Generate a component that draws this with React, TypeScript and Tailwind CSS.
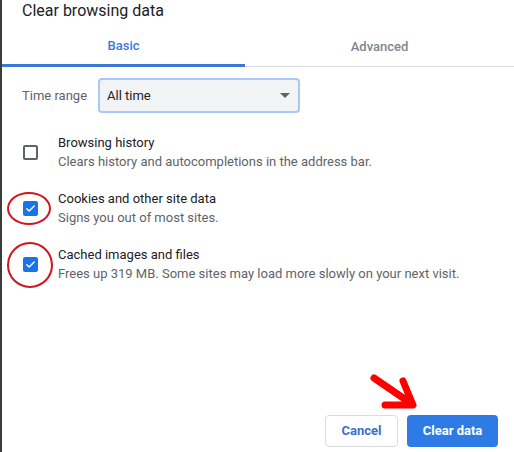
function Checkbox({ checked }: { checked: boolean }) {
  if (!checked) {
    return <div className="h-[15px] w-[15px] rounded-[2px] border-2 border-[#5f6368] bg-white" />;
  }
  return (
    <div className="flex h-[15px] w-[15px] items-center justify-center rounded-[2px] bg-[#1a73e8]">
      <svg width="11" height="11" viewBox="0 0 24 24" fill="none">
        <path d="M4 12.5l5 5L20 6.5" stroke="#fff" strokeWidth="3.2" strokeLinecap="round" strokeLinejoin="round" />
      </svg>
    </div>
  );
}

function Row({ checked, title, sub, ring }: { checked: boolean; title: string; sub: string; ring?: string }) {
  return (
    <div className="relative flex h-[56px] items-center">
      <div className="flex w-[56px] shrink-0 pl-[21px]">
        <Checkbox checked={checked} />
      </div>
      <div className="flex flex-col text-[13px] leading-[19px]">
        <span className="text-[#202124]">{title}</span>
        <span className="text-[#5f6368]">{sub}</span>
      </div>
      {ring && <div className={ring} />}
    </div>
  );
}

export default function App() {
  return (
    <div className="relative flex h-[452px] w-[514px] overflow-hidden bg-white font-['Roboto','Liberation_Sans',sans-serif]">
      <div className="w-[2px] shrink-0 bg-[#3c3c3c]" />
      <div className="flex flex-1 flex-col">
        <h1 className="h-[27px] pl-[20px] pt-[1px] text-[16px] leading-[20px] font-normal text-[#202124]">
          Clear browsing data
        </h1>
        <div className="flex h-[40px] text-[13px] font-medium">
          <div className="flex w-[243px] items-center justify-center border-b-[3px] border-[#3c78d8] text-[#3c78d8]">
            Basic
          </div>
          <div className="flex flex-1 items-center justify-center border-b border-[#dadce0] pt-[1px] text-[#80868b]">
            Advanced
          </div>
        </div>
        <div className="mt-[11px] flex items-center">
          <span className="w-[96px] pl-[20px] text-[13px] text-[#5f6368]">Time range</span>
          <div className="flex h-[35px] w-[202px] items-center justify-between rounded-[4px] border-2 border-[#a8c7fa] bg-[#f1f3f4] pl-[7px] pr-[8px] text-[13px] text-[#202124]">
            <span>All time</span>
            <svg width="10" height="5" viewBox="0 0 10 5">
              <path d="M0 0h10L5 5z" fill="#5f6368" />
            </svg>
          </div>
        </div>
        <div className="mt-[11px] flex flex-col">
          <Row checked={false} title="Browsing history" sub="Clears history and autocompletions in the address bar." />
          <Row
            checked
            title="Cookies and other site data"
            sub="Signs you out of most sites."
            ring="absolute left-[5px] top-[12px] h-[33px] w-[44px] rounded-[50%] border-2 border-[#d4141c]"
          />
          <Row
            checked
            title="Cached images and files"
            sub="Frees up 319 MB. Some sites may load more slowly on your next visit."
            ring="absolute left-[5px] top-[6px] h-[46px] w-[46px] rounded-[50%] border-2 border-[#d4141c]"
          />
        </div>
        <div className="mt-auto mb-[5px] flex justify-end gap-[9px] pr-[16px]">
          <button className="h-[32px] w-[73px] rounded-[4px] border border-[#dadce0] bg-white text-[13px] font-bold text-[#3c6fcf]">
            Cancel
          </button>
          <button className="h-[32px] w-[91px] rounded-[4px] bg-[#2f7be6] text-[13px] font-bold text-white">
            Clear data
          </button>
        </div>
      </div>
      <svg className="absolute left-[366px] top-[372px]" width="56" height="42" viewBox="0 0 56 42" fill="none">
        <path
          d="M8 6L46 32M37 9L47 33L19 33"
          stroke="#ff0000"
          strokeWidth="7"
          strokeLinecap="round"
          strokeLinejoin="round"
        />
      </svg>
    </div>
  );
}
